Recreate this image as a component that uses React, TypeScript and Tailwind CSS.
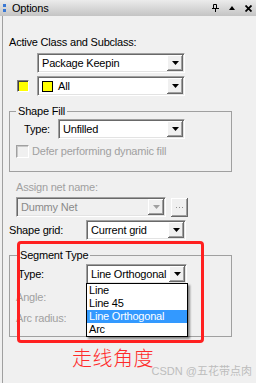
import React from "react";

const Arrow = ({ disabled }: { disabled?: boolean }) => (
    <svg width="7" height="4" viewBox="0 0 7 4">
        <polygon points="0,0 7,0 3.5,4" fill={disabled ? "#a0a0a0" : "#000"} />
    </svg>
);

interface ComboProps {
    className: string;
    text: string;
    disabled?: boolean;
    swatch?: boolean;
}

const Combo = ({ className, text, disabled, swatch }: ComboProps) => (
    <div
        className={`flex h-[20px] items-center border border-t-[#a0a0a0] border-l-[#a0a0a0] border-b-white border-r-white shadow-[inset_1px_1px_0_#696969,inset_-1px_-1px_0_#e3e3e3] ${
            disabled ? "bg-[#f0f0f0]" : "bg-white"
        } ${className}`}
    >
        {swatch && (
            <span className="ml-[4px] h-[11px] w-[11px] border border-black bg-[#ffff00]" />
        )}
        <span
            className={`flex-1 truncate leading-[14px] ${swatch ? "pl-[5px]" : "pl-[4px]"} ${
                disabled ? "text-[#8a8a8a]" : "text-black"
            }`}
        >
            {text}
        </span>
        <span className="mr-[1px] flex h-[16px] w-[16px] items-center justify-center bg-[#f0f0f0] shadow-[inset_-1px_-1px_0_#696969,inset_1px_1px_0_#ffffff,inset_-2px_-2px_0_#a0a0a0]">
            <Arrow disabled={disabled} />
        </span>
    </div>
);

const TitleBar = () => (
    <div className="flex h-[16px] items-center bg-gradient-to-b from-[#ececec] to-[#c4c4c4]">
        <div className="ml-[3px] flex flex-col gap-[2px]">
            <span className="h-[3px] w-[3px] bg-[#3a78d4]" />
            <span className="h-[3px] w-[3px] bg-[#3a78d4]" />
        </div>
        <span className="ml-[6px] text-[11px] leading-[14px] text-black">Options</span>
        <div className="ml-auto mr-[4px] flex items-center gap-[10px]">
            <svg width="7" height="8" viewBox="0 0 7 8">
                <path d="M1.5 0.5V4.5M4.5 0.5V4.5M1.5 0.5H4.5M0 4.5H7M3.5 4.5V8" stroke="#000" strokeWidth="1" fill="none" />
            </svg>
            <svg width="6" height="4" viewBox="0 0 6 4">
                <polygon points="0,4 6,4 3,0" fill="#000" />
            </svg>
            <svg width="7" height="7" viewBox="0 0 7 7">
                <path d="M0.5 0.5L6.5 6.5M6.5 0.5L0.5 6.5" stroke="#000" strokeWidth="1.8" />
            </svg>
        </div>
    </div>
);

const App = () => {
    return (
        <div className="relative h-[383px] w-[256px] overflow-hidden bg-[#f0f0f0] font-['Liberation_Sans','Noto_Sans_CJK_SC',sans-serif] text-[11px] tracking-[-0.2px] text-black">
            <TitleBar />
            <div className="ml-[2px] h-[367px] border-l border-[#a0a0a0] pl-[6px]">
                <div className="pt-[19px] leading-[14px]">Active Class and Subclass:</div>

                <Combo className="ml-[28px] mt-[4px] w-[148px]" text="Package Keepin" />

                <div className="mt-[3px] flex items-center">
                    <span className="ml-[8px] h-[12px] w-[12px] border border-t-[#808080] border-l-[#808080] border-b-white border-r-white bg-[#ffff00] shadow-[inset_1px_1px_0_#404040]" />
                    <Combo className="ml-[8px] w-[148px]" text="All" swatch />
                </div>

                <fieldset className="mt-[8px] w-[223px] border border-[#a0a0a0] pb-[13px]">
                    <legend className="ml-[6px] px-[2px] leading-[14px]">Shape Fill</legend>
                    <div className="ml-[14px] mt-[1px] flex items-center">
                        <span className="w-[34px] leading-[14px]">Type:</span>
                        <Combo className="w-[127px]" text="Unfilled" />
                    </div>
                    <div className="ml-[6px] mt-[5px] flex items-center">
                        <span className="h-[13px] w-[13px] border border-t-[#a0a0a0] border-l-[#a0a0a0] border-b-white border-r-white bg-[#f0f0f0] shadow-[inset_1px_1px_0_#c8c8c8]" />
                        <span className="ml-[3px] leading-[14px] text-[#a0a0a0]">
                            Defer performing dynamic fill
                        </span>
                    </div>
                </fieldset>

                <div className="ml-[7px] mt-[8px] leading-[14px] text-[#a0a0a0]">Assign net name:</div>

                <div className="mt-[3px] flex items-center">
                    <Combo className="ml-[7px] w-[150px]" text="Dummy Net" disabled />
                    <span className="ml-[5px] flex h-[19px] w-[17px] items-center justify-center gap-[2px] bg-[#f0f0f0] pt-[1px] shadow-[inset_-1px_-1px_0_#696969,inset_1px_1px_0_#ffffff,inset_-2px_-2px_0_#a0a0a0]">
                        <span className="h-[1px] w-[1px] bg-[#909090]" />
                        <span className="h-[1px] w-[1px] bg-[#909090]" />
                        <span className="h-[1px] w-[1px] bg-[#909090]" />
                    </span>
                </div>

                <div className="mt-[3px] flex items-center">
                    <span className="w-[77px] leading-[14px]">Shape grid:</span>
                    <Combo className="w-[100px]" text="Current grid" />
                </div>

                <fieldset className="mt-[8px] w-[223px] border border-[#a0a0a0] pb-[11px]">
                    <legend className="ml-[8px] px-[2px] leading-[14px]">Segment Type</legend>
                    <div className="ml-[8px] mt-[2px] flex items-center">
                        <span className="w-[68px] leading-[14px]">Type:</span>
                        <Combo className="w-[101px]" text="Line Orthogonal" />
                    </div>
                    <div className="ml-[6px] mt-[6px] leading-[14px] text-[#a0a0a0]">Angle:</div>
                    <div className="ml-[6px] mt-[7px] leading-[14px] text-[#a0a0a0]">Arc radius:</div>
                </fieldset>

                <div className="ml-[63px] mt-[9px] text-[20px] font-light leading-[26px] tracking-[0.5px] text-[#ff2a2a]">
                    走线角度
                </div>
            </div>

            <div className="absolute left-[86px] top-[283px] w-[102px] border border-black bg-white leading-[13px] shadow-[2px_2px_2px_rgba(0,0,0,0.45)]">
                <div className="h-[13px] pl-[2px]">Line</div>
                <div className="h-[13px] pl-[2px]">Line 45</div>
                <div className="h-[13px] bg-[#3399ff] pl-[2px] text-white">Line Orthogonal</div>
                <div className="h-[13px] pl-[2px]">Arc</div>
            </div>

            <div className="pointer-events-none absolute left-[17px] top-[241px] h-[102px] w-[187px] rounded-[4px] border-[3px] border-[#ff2020]" />

            <div className="absolute bottom-[5px] right-[4px] text-[11px] leading-[13px] tracking-normal text-[#bdbdbd]">
                CSDN @五花带点肉
            </div>
        </div>
    );
};

export default App;
